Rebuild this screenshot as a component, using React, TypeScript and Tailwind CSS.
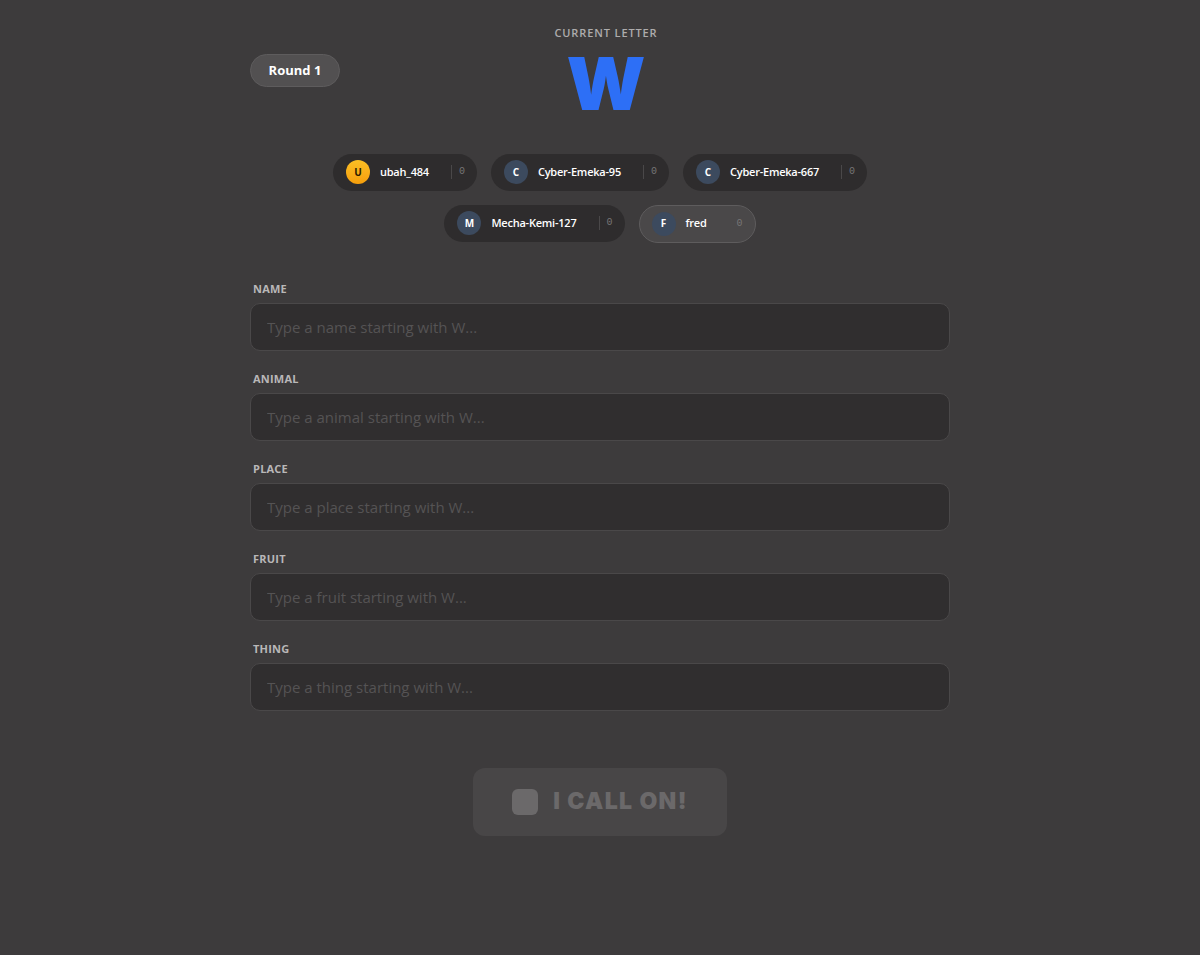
import React from "react";

type Player = { name: string; score: number; you?: boolean; gold?: boolean };

const players: Player[][] = [
    [
        { name: "ubah_484", score: 0, gold: true },
        { name: "Cyber-Emeka-95", score: 0 },
        { name: "Cyber-Emeka-667", score: 0 },
    ],
    [
        { name: "Mecha-Kemi-127", score: 0 },
        { name: "fred", score: 0, you: true },
    ],
];

const fields = ["name", "animal", "place", "fruit", "thing"];

const PlayerPill: React.FC<{ player: Player }> = ({ player }) => {
    return (
        <div
            className={
                player.you
                    ? "flex items-center h-[38px] pl-[12px] pr-[12px] rounded-full bg-[#4a4849] border border-[#5e5c5d]"
                    : "flex items-center h-[37px] pl-[13px] pr-[12px] rounded-full bg-[#2e2c2d]"
            }
        >
            <div
                className={
                    player.gold
                        ? "w-[24px] h-[24px] rounded-full bg-gradient-to-b from-[#fbbf24] to-[#f59e0b] text-[#2a1a00] flex items-center justify-center text-[10px] font-bold"
                        : "w-[24px] h-[24px] rounded-full bg-[#3c4a5e] text-white flex items-center justify-center text-[10px] font-bold"
                }
            >
                {player.name[0].toUpperCase()}
            </div>
            <span className="ml-[10px] text-[11px] font-semibold tracking-[-0.02em] text-white">{player.name}</span>
            <div className="ml-[22px] h-[14px] border-l border-[#4a4849]" />
            <span className="ml-[7px] text-[10px] leading-[14px] font-['Liberation_Mono',monospace] text-[#777576]">{player.score}</span>
        </div>
    );
};

export default function App() {
    return (
        <div className="min-h-[955px] bg-[#3d3b3c] font-['Open_Sans',sans-serif] text-white">
            <div className="w-[700px] mx-auto pt-[25px]">
                <div className="relative flex flex-col items-center pl-[12px]">
                    <div className="absolute left-0 top-[29px] h-[33px] w-[90px] rounded-full bg-[#525051] border border-[#5e5c5d] flex items-center justify-center text-[13px] font-bold text-white">
                        Round 1
                    </div>
                    <div className="text-[11px] font-semibold tracking-[0.08em] text-[#aeacad]">CURRENT LETTER</div>
                    <div className="mt-[2px] text-[73px] leading-[80px] font-black text-[#2d6ff6] font-['Inter',sans-serif]">W</div>
                </div>

                <div className="mt-[30px] flex flex-col items-center gap-[14px]">
                    {players.map((row, i) => (
                        <div key={i} className="flex gap-[14px]">
                            {row.map((p) => (
                                <PlayerPill key={p.name} player={p} />
                            ))}
                        </div>
                    ))}
                </div>

                <div className="mt-[38px] flex flex-col gap-[20px]">
                    {fields.map((f) => (
                        <div key={f} className="flex flex-col">
                            <label className="pl-[3px] text-[11px] font-bold uppercase tracking-[0.02em] text-[#b9b7b8] leading-[16px]">{f}</label>
                            <input
                                disabled
                                placeholder={`Type a ${f} starting with W...`}
                                className="mt-[6px] h-[48px] w-full rounded-[10px] bg-[#302e2f] border border-[#4a4849] px-[16px] text-[15px] text-white placeholder:text-[#555354] outline-none"
                            />
                        </div>
                    ))}
                </div>

                <div className="mt-[57px] flex justify-center">
                    <button
                        disabled
                        className="w-[254px] h-[68px] rounded-[12px] bg-[#484647] flex items-center justify-center gap-[15px] text-[23px] font-black tracking-[0.06em] text-[#6b696a] font-['Inter',sans-serif]"
                    >
                        <span className="w-[26px] h-[26px] rounded-[6px] bg-[#6b696a]" />
                        <span>I CALL ON!</span>
                    </button>
                </div>
            </div>
        </div>
    );
}
